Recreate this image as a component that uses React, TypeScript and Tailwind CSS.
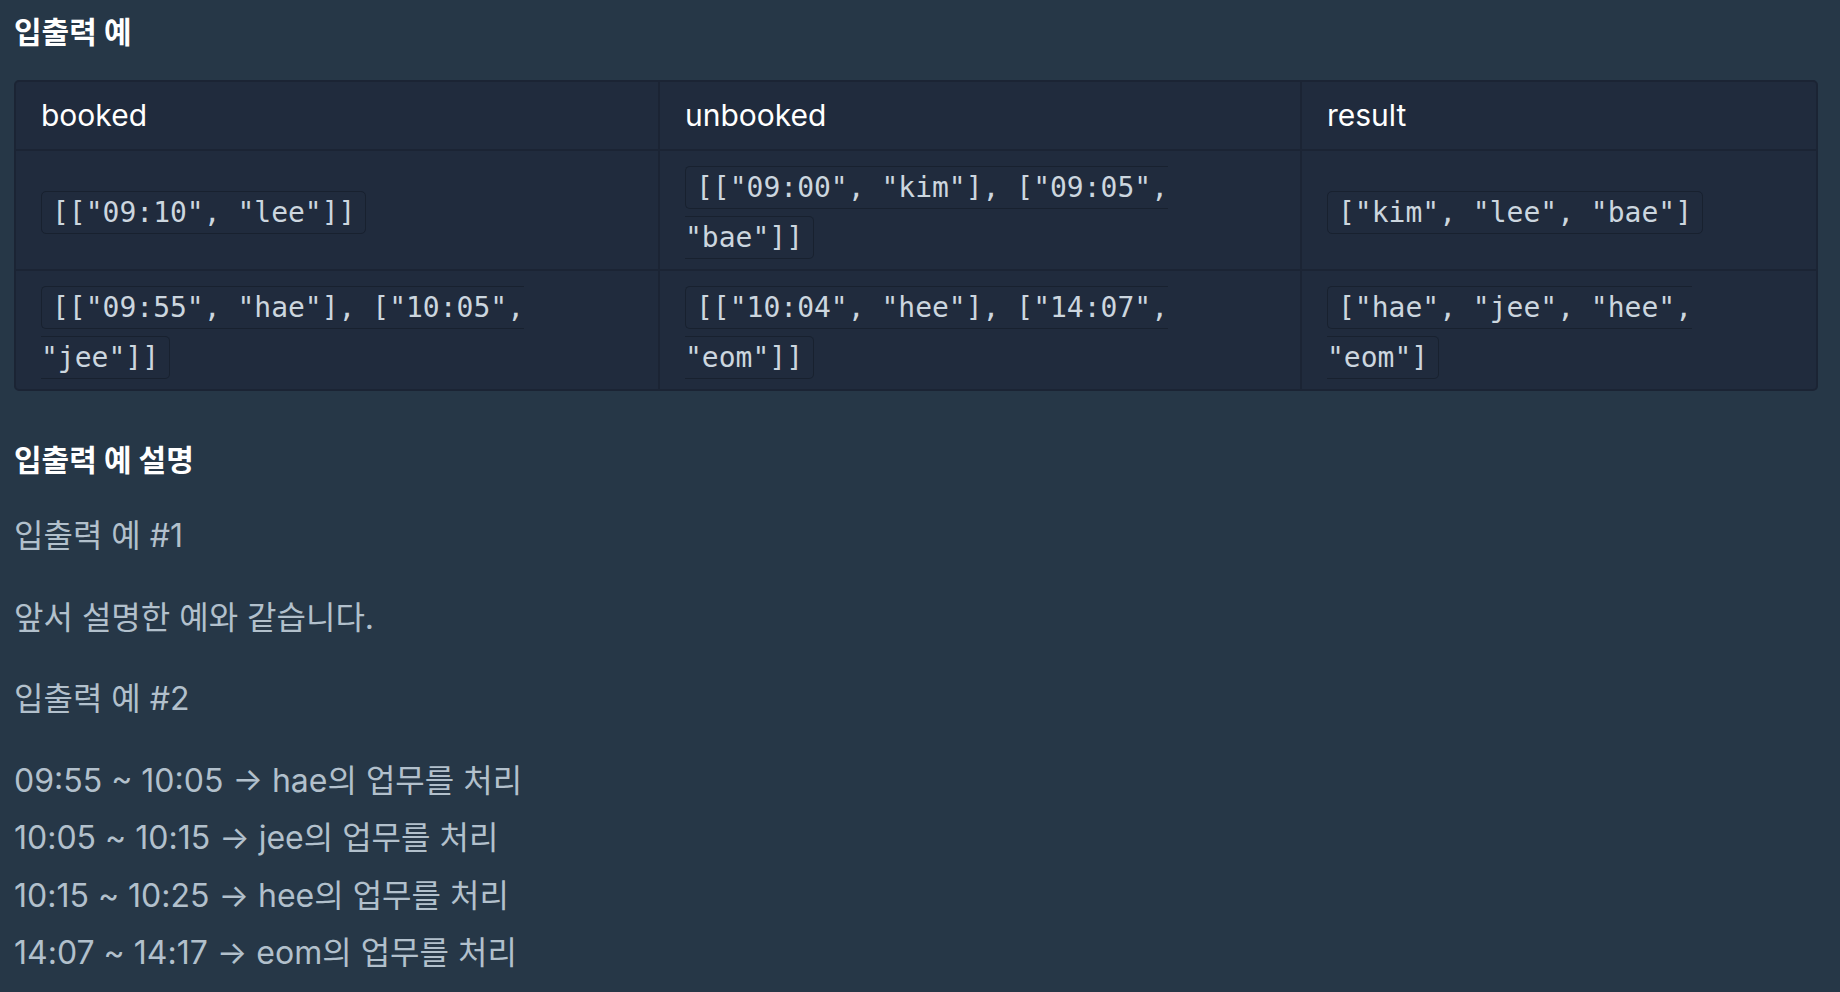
const FONT = "font-['Inter','Noto_Sans_CJK_KR',sans-serif]"

interface ExampleRow {
  booked: string
  unbooked: string
  result: string
}

const rows: ExampleRow[] = [
  {
    booked: '[["09:10", "lee"]]',
    unbooked: '[["09:00", "kim"], ["09:05", "bae"]]',
    result: '["kim", "lee", "bae"]',
  },
  {
    booked: '[["09:55", "hae"], ["10:05", "jee"]]',
    unbooked: '[["10:04", "hee"], ["14:07", "eom"]]',
    result: '["hae", "jee", "hee", "eom"]',
  },
]

const steps = [
  '09:55 ~ 10:05 → hae의 업무를 처리',
  '10:05 ~ 10:15 → jee의 업무를 처리',
  '10:15 ~ 10:25 → hee의 업무를 처리',
  '14:07 ~ 14:17 → eom의 업무를 처리',
]

function Code({ children }: { children: string }) {
  return (
    <code className="font-['DejaVu_Sans_Mono',monospace] text-[28px] leading-[50px] text-[#ccd6df] bg-[#202b3d] border border-[#18212f] rounded-[5px] px-[10px] py-[4px]">
      {children}
    </code>
  )
}

export default function App() {
  const headers = ['booked', 'unbooked', 'result']

  return (
    <div className={`min-h-screen bg-[#263747] pl-[14px] pr-[22px] pt-[7px] pb-4 ${FONT}`}>
      <h5 className="text-[30px] font-bold text-white leading-[50px]">입출력 예</h5>

      <div className="mt-[23px] rounded-[5px] border-2 border-[#1b2434] bg-[#202b3d] overflow-hidden">
        <table className="w-full table-fixed border-separate border-spacing-0">
          <colgroup>
            <col className="w-[644px]" />
            <col className="w-[642px]" />
            <col />
          </colgroup>
          <thead>
            <tr>
              {headers.map((h, i) => (
                <th
                  key={h}
                  className={`text-left font-normal text-white text-[30px] leading-[50px] px-[25px] pt-[8px] pb-[9px] border-b-2 border-[#1b2434] ${i < 2 ? 'border-r-2' : ''}`}
                >
                  {h}
                </th>
              ))}
            </tr>
          </thead>
          <tbody>
            {rows.map((r, ri) => (
              <tr key={ri}>
                {[r.booked, r.unbooked, r.result].map((v, ci) => (
                  <td
                    key={ci}
                    className={`align-middle font-['DejaVu_Sans_Mono',monospace] text-[28px] leading-[50px] px-[25px] pt-[12px] pb-[6px] border-[#1b2434] ${ci < 2 ? 'border-r-2' : ''} ${ri === 0 ? 'border-b-2' : ''}`}
                  >
                    <Code>{v}</Code>
                  </td>
                ))}
              </tr>
            ))}
          </tbody>
        </table>
      </div>

      <h5 className="mt-[44px] text-[30px] font-bold text-white leading-[50px]">입출력 예 설명</h5>

      <div className="mt-[22px] text-[32px] leading-[57.5px] text-[#b2c0cc]">
        <p className="mb-6">입출력 예 #1</p>
        <p className="mb-6">앞서 설명한 예와 같습니다.</p>
        <p className="mb-6">입출력 예 #2</p>
        <p>
          {steps.map((s, i) => (
            <span key={i}>
              {s}
              {i < steps.length - 1 && <br />}
            </span>
          ))}
        </p>
      </div>
    </div>
  )
}
